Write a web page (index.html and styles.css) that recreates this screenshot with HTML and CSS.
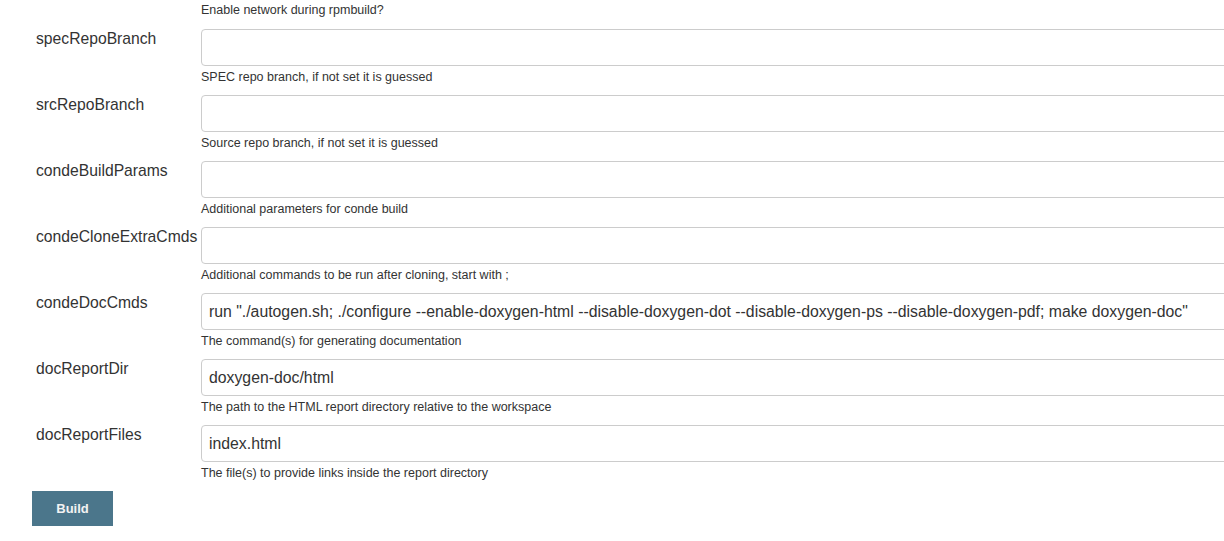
FILE: index.html
```html
<!DOCTYPE html>
<html>
<head>
<meta charset="utf-8">
<link rel="stylesheet" href="styles.css">
</head>
<body>
<form class="form">
  <div class="help first">Enable network during rpmbuild?</div>

  <div class="row"><label class="label">specRepoBranch</label><input class="field" type="text" value=""></div>
  <div class="help">SPEC repo branch, if not set it is guessed</div>

  <div class="row"><label class="label">srcRepoBranch</label><input class="field" type="text" value=""></div>
  <div class="help">Source repo branch, if not set it is guessed</div>

  <div class="row"><label class="label">condeBuildParams</label><input class="field" type="text" value=""></div>
  <div class="help">Additional parameters for conde build</div>

  <div class="row"><label class="label">condeCloneExtraCmds</label><input class="field" type="text" value=""></div>
  <div class="help">Additional commands to be run after cloning, start with ;</div>

  <div class="row"><label class="label">condeDocCmds</label><input class="field" type="text" value='run "./autogen.sh; ./configure --enable-doxygen-html --disable-doxygen-dot --disable-doxygen-ps --disable-doxygen-pdf; make doxygen-doc"'></div>
  <div class="help">The command(s) for generating documentation</div>

  <div class="row"><label class="label">docReportDir</label><input class="field" type="text" value="doxygen-doc/html"></div>
  <div class="help">The path to the HTML report directory relative to the workspace</div>

  <div class="row"><label class="label">docReportFiles</label><input class="field" type="text" value="index.html"></div>
  <div class="help">The file(s) to provide links inside the report directory</div>

  <div class="actions"><button class="build" type="button">Build</button></div>
</form>
</body>
</html>
```

FILE: styles.css
```css
html, body {
  margin: 0;
  padding: 0;
  background: #fff;
  overflow: hidden;
}
body {
  font-family: "Liberation Sans", Arial, sans-serif;
  color: #333;
}
.form {
  width: 1224px;
  overflow: hidden;
}
.row {
  display: flex;
  align-items: flex-start;
}
.label {
  box-sizing: border-box;
  width: 201px;
  flex: none;
  padding-left: 36px;
  margin-top: 0;
  font-size: 15.7px;
  line-height: 20px;
  color: #333;
  white-space: nowrap;
}
.field {
  box-sizing: border-box;
  flex: none;
  width: 1040px;
  height: 37px;
  margin: 0;
  padding: 0 7px;
  border: 1px solid #ccc;
  border-radius: 4px;
  background: #fff;
  font-family: "Liberation Sans", Arial, sans-serif;
  font-size: 15.8px;
  color: #333;
  outline: none;
}
.help {
  margin-left: 201px;
  padding-top: 2px;
  padding-bottom: 9px;
  font-size: 12.5px;
  line-height: 18px;
  color: #333;
  white-space: nowrap;
}
.help.first {
  padding-top: 1px;
  padding-bottom: 10px;
}
.actions {
  padding-left: 32px;
}
.build {
  width: 81px;
  height: 35px;
  border: none;
  border-radius: 0;
  background: #4b768b;
  color: #f2f2f2;
  font-family: "Liberation Sans", Arial, sans-serif;
  font-weight: bold;
  font-size: 13px;
  padding: 0;
  cursor: pointer;
}
```
